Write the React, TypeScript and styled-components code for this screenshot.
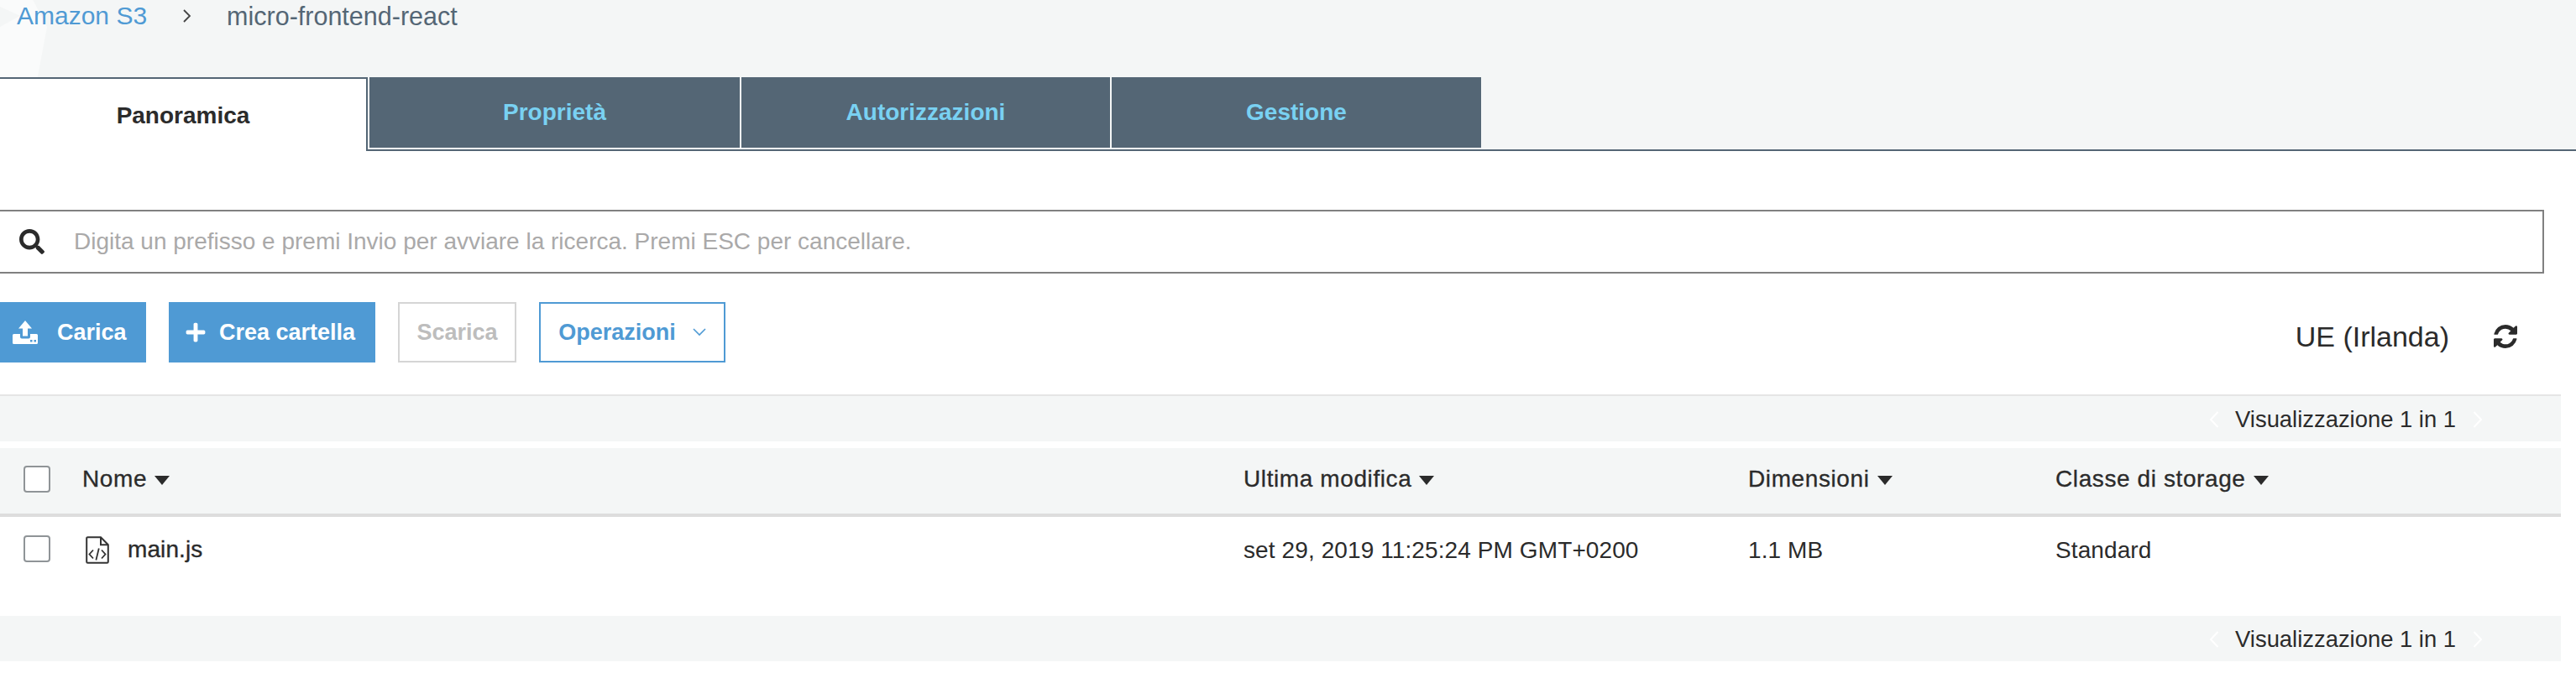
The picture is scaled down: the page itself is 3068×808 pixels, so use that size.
import React from 'react'
import styled, { createGlobalStyle } from 'styled-components'
import { FaPlus, FaSearch } from 'react-icons/fa'

const GlobalStyle = createGlobalStyle`
  html, body {
    margin: 0;
    background: #fff;
  }
  body {
    font-family: "Liberation Sans", Arial, sans-serif;
    color: #2b2b2b;
  }
`

const Page = styled.div`
  width: 3068px;
  height: 808px;
  overflow: hidden;
  display: flex;
  flex-direction: column;
`

const TopArea = styled.div`
  position: relative;
  background: #f4f6f6;
  height: 180px;
  box-sizing: border-box;
  border-bottom: 2px solid #546675;
  &::before {
    content: '';
    position: absolute;
    left: 0;
    top: 0;
    width: 56px;
    height: 92px;
    background: #fafbfb;
    clip-path: polygon(0 0, 70% 0, 100% 32px, 80% 92px, 0 92px);
  }
  &::after {
    content: '';
    position: absolute;
    left: 0;
    top: 8px;
    width: 24px;
    height: 24px;
    background: #f4f6f6;
    clip-path: polygon(0 0, 100% 45%, 0 100%);
  }
`

const Breadcrumb = styled.div`
  position: relative;
  z-index: 1;
  height: 92px;
  box-sizing: border-box;
  padding: 0 0 0 20px;
  display: flex;
  align-items: flex-start;
  font-size: 30px;
  line-height: 38px;
`

const CrumbLink = styled.a`
  color: #4f9ad4;
`

const CrumbCurrent = styled.span`
  color: #546675;
  font-size: 30.5px;
`

const CrumbSeparator = styled.svg`
  width: 12px;
  height: 18px;
  margin: 10px 41px 0 42px;
  flex: none;
`

const TabRow = styled.div`
  position: relative;
  display: flex;
  align-items: flex-start;
`

const Tab = styled.div<{ $active?: boolean; $width: number }>`
  box-sizing: border-box;
  display: flex;
  align-items: center;
  justify-content: center;
  width: ${p => p.$width}px;
  margin-right: 2px;
  font-size: 28px;
  font-weight: 700;
  ${p =>
    p.$active
      ? `
    height: 88px;
    background: #fff;
    color: #2b2b2b;
    border-top: 2px solid #546675;
    border-right: 2px solid #546675;
    padding-top: 2px;
  `
      : `
    height: 84px;
    background: #546675;
    color: #79d1f2;
  `}
`

const SearchBox = styled.div`
  margin: 70px 0 0 -2px;
  width: 3032px;
  height: 76px;
  box-sizing: border-box;
  border: 2px solid #808080;
  display: flex;
  align-items: center;
  padding-left: 23px;
  font-size: 28px;
  color: #aaa9a9;
`

const SearchIcon = styled(FaSearch)`
  width: 30px;
  height: 30px;
  color: #2b2b2b;
  margin-right: 35px;
  flex: none;
`

const Toolbar = styled.div`
  margin-top: 34px;
  height: 72px;
  width: 3000px;
  display: flex;
  align-items: stretch;
`

const Button = styled.div<{ $kind: 'primary' | 'disabled' | 'outline'; $width: number; $inset?: number }>`
  box-sizing: border-box;
  display: flex;
  align-items: center;
  justify-content: ${p => (p.$inset ? 'flex-start' : 'center')};
  padding-left: ${p => p.$inset || 0}px;
  width: ${p => p.$width}px;
  font-size: 27px;
  font-weight: 700;
  margin-right: 27px;
  ${p => p.$kind === 'primary' && 'background: #4f9ad4; color: #fff;'}
  ${p => p.$kind === 'disabled' && 'border: 2px solid #d5d5d5; color: #bdbdbd;'}
  ${p => p.$kind === 'outline' && 'border: 2px solid #4f9ad4; color: #4f9ad4;'}
`

const UploadIcon = styled.svg`
  width: 30px;
  height: 28px;
  margin-right: 23px;
  flex: none;
`

const PlusIcon = styled(FaPlus)`
  width: 26px;
  height: 26px;
  margin-right: 15px;
  flex: none;
`

const ChevronIcon = styled.svg`
  width: 16px;
  height: 10px;
  margin-left: 20px;
  flex: none;
`

const Region = styled.div`
  margin-left: auto;
  display: flex;
  align-items: center;
  font-size: 34px;
  padding-top: 10px;
`

const RefreshIcon = styled.svg`
  width: 28px;
  height: 28px;
  margin-left: 53px;
  margin-right: 2px;
  flex: none;
`

const PagerBar = styled.div<{ $top?: boolean }>`
  width: 3050px;
  height: ${p => (p.$top ? '56px' : '54px')};
  margin-top: ${p => (p.$top ? '38px' : '0')};
  box-sizing: border-box;
  background: #f4f6f6;
  border-top: ${p => (p.$top ? '2px solid #e5e5e5' : 'none')};
  display: flex;
  align-items: center;
  justify-content: flex-end;
  padding: 1px 93px 0 0;
  font-size: 27.4px;
`

const PagerArrow = styled.svg`
  width: 12px;
  height: 22px;
  flex: none;
`

const PagerText = styled.span`
  margin: 0 20px 0 19px;
`

const TableRow = styled.div<{ $head?: boolean }>`
  width: 3050px;
  box-sizing: border-box;
  display: grid;
  grid-template-columns: 28px 71px 1382px 601px 366px 1fr;
  align-items: center;
  font-size: 28px;
  ${p =>
    p.$head
      ? `
    margin-top: 8px;
    height: 82px;
    padding-bottom: 4px;
    background: #f4f6f6;
    border-bottom: 4px solid #dddddd;
    letter-spacing: 0.6px;
    -webkit-text-stroke: 0.3px #2b2b2b;
  `
      : `
    height: 118px;
    padding-bottom: 42px;
    letter-spacing: 0.1px;
  `}
`

const Check = styled.span`
  grid-column: 2;
  display: block;
  box-sizing: border-box;
  width: 32px;
  height: 32px;
  border: 2px solid #8f9497;
  border-radius: 4px;
  background: #fff;
`

const HeadCell = styled.div<{ $first?: boolean }>`
  display: flex;
  align-items: center;
  ${p => p.$first && 'grid-column: 3; margin-left: -1px;'}
`

const Caret = styled.span`
  width: 0;
  height: 0;
  margin-left: 9px;
  margin-top: 2px;
  border-left: 9px solid transparent;
  border-right: 9px solid transparent;
  border-top: 11px solid #2b2b2b;
`

const Cell = styled.div`
  padding-top: 3px;
`

const FileName = styled.div`
  display: flex;
  align-items: center;
  padding: 2px 0 0 3px;
  white-space: nowrap;
  -webkit-text-stroke: 0.35px #2b2b2b;
`

const FileIcon = styled.svg`
  width: 28px;
  height: 33px;
  margin-right: 22px;
  flex: none;
`

const Arrow = ({ dir }: { dir: 'left' | 'right' }) => (
  <PagerArrow viewBox="0 0 12 22">
    <path
      d={dir === 'left' ? 'M10.5 2 2 11l8.5 9' : 'M1.5 2 10 11l-8.5 9'}
      fill="none"
      stroke="#fff"
      strokeWidth="2"
    />
  </PagerArrow>
)

const Pager = ({ top }: { top?: boolean }) => (
  <PagerBar $top={top}>
    <Arrow dir="left" />
    <PagerText>Visualizzazione 1 in 1</PagerText>
    <Arrow dir="right" />
  </PagerBar>
)

const tabs = [
  { label: 'Panoramica', width: 438, active: true },
  { label: 'Proprietà', width: 441 },
  { label: 'Autorizzazioni', width: 439 },
  { label: 'Gestione', width: 440 },
]

const columns = ['Nome', 'Ultima modifica', 'Dimensioni', 'Classe di storage']

export default function App() {
  return (
    <Page>
      <GlobalStyle />
      <TopArea>
        <Breadcrumb>
          <CrumbLink>Amazon S3</CrumbLink>
          <CrumbSeparator viewBox="0 0 12 18">
            <path d="M2 2l7 7-7 7" fill="none" stroke="#444" strokeWidth="1.8" />
          </CrumbSeparator>
          <CrumbCurrent>micro-frontend-react</CrumbCurrent>
        </Breadcrumb>
        <TabRow>
          {tabs.map(tab => (
            <Tab key={tab.label} $active={tab.active} $width={tab.width}>
              {tab.label}
            </Tab>
          ))}
        </TabRow>
      </TopArea>

      <SearchBox>
        <SearchIcon />
        Digita un prefisso e premi Invio per avviare la ricerca. Premi ESC per cancellare.
      </SearchBox>

      <Toolbar>
        <Button $kind="primary" $width={174} $inset={15}>
          <UploadIcon viewBox="0 0 30 28">
            <path
              fill="#fff"
              d="M15 0l8 9.500h-5v9h-6v-9H7zM1.500 16H9v3.500a2 2 0 0 0 2 2h8a2 2 0 0 0 2-2V16h7.500A1.500 1.500 0 0 1 30 17.500v9a1.500 1.500 0 0 1-1.500 1.500h-27A1.500 1.500 0 0 1 0 26.500v-9A1.500 1.500 0 0 1 1.500 16z"
            />
            <path fill="#4f9ad4" d="M21 23h2.500v2.500H21zM25.500 23H28v2.500h-2.500z" />
          </UploadIcon>
          Carica
        </Button>
        <Button $kind="primary" $width={246} $inset={19}>
          <PlusIcon />
          Crea cartella
        </Button>
        <Button $kind="disabled" $width={141}>
          Scarica
        </Button>
        <Button $kind="outline" $width={222}>
          Operazioni
          <ChevronIcon viewBox="0 0 16 10">
            <path d="M1 1l7 7 7-7" fill="none" stroke="#4f9ad4" strokeWidth="1.6" />
          </ChevronIcon>
        </Button>
        <Region>
          UE (Irlanda)
          <RefreshIcon viewBox="0 0 1536 1536">
            <path
              fill="#2b2b2b"
              d="M1511 928q0 5-1 7-64 268-268 434.500t-478 166.500q-146 0-282.500-55t-243.500-157l-129 129q-19 19-45 19t-45-19-19-45v-448q0-26 19-45t45-19h448q26 0 45 19t19 45-19 45l-137 137q71 66 161 102t187 36q134 0 250-65t186-179q11-17 53-117 8-23 30-23h192q13 0 22.500 9.500t9.500 22.500zm25-800v448q0 26-19 45t-45 19h-448q-26 0-45-19t-19-45 19-45l138-138q-148-137-349-137-134 0-250 65t-186 179q-11 17-53 117-8 23-30 23h-199q-13 0-22.500-9.500t-9.500-22.500v-7q65-268 270-434.500t480-166.500q146 0 284 55.500t245 156.500l130-129q19-19 45-19t45 19 19 45z"
            />
          </RefreshIcon>
        </Region>
      </Toolbar>

      <Pager top />

      <TableRow $head>
        <Check />
        {columns.map((label, i) => (
          <HeadCell key={label} $first={i === 0}>
            {label}
            <Caret />
          </HeadCell>
        ))}
      </TableRow>

      <TableRow>
        <Check />
        <FileName>
          <FileIcon viewBox="0 0 28 33">
            <path
              d="M2.500 1.200h15.500l8.800 9v20.300a1.300 1.300 0 0 1-1.300 1.300H2.500a1.300 1.300 0 0 1-1.300-1.300V2.500a1.300 1.300 0 0 1 1.300-1.300z"
              fill="none"
              stroke="#333"
              strokeWidth="2"
            />
            <path d="M18 1.500v8.700h8.500" fill="none" stroke="#333" strokeWidth="2" />
            <path
              d="M9 16.500l-4.500 5 4.500 5M19 16.500l4.500 5-4.500 5M15.800 14.500l-3.400 14"
              fill="none"
              stroke="#333"
              strokeWidth="1.800"
            />
          </FileIcon>
          main.js
        </FileName>
        <Cell>set 29, 2019 11:25:24 PM GMT+0200</Cell>
        <Cell>1.1 MB</Cell>
        <Cell>Standard</Cell>
      </TableRow>

      <Pager />
    </Page>
  )
}
